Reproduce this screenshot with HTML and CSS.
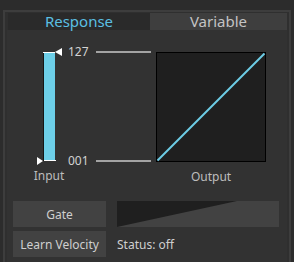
FILE: index.html
```html
<!DOCTYPE html>
<html lang="en">
  <head>
    <meta charset="utf-8" />
    <title>Velocity</title>
    <link rel="stylesheet" href="styles.css">
  </head>
  <body>
    <div class="frame">
      <div class="tabs">
        <div class="tab active">Response</div>
        <div class="tab">Variable</div>
      </div>
      <div class="panel">
        <div class="scale">
          <div class="slider-col">
            <div class="bar"></div>
            <span class="caption">Input</span>
          </div>
          <div class="values">
            <span>127</span>
            <span>001</span>
          </div>
          <div class="lines">
            <div class="line"></div>
            <div class="line"></div>
          </div>
          <div class="graph-col">
            <svg class="graph" width="110" height="110" viewBox="0 0 110 110">
              <rect x="0.5" y="0.5" width="109" height="109" fill="#1f1f1f" stroke="#000" />
              <line x1="1.5" y1="108.5" x2="108.5" y2="1.5" stroke="#6dcde6" stroke-width="2" />
            </svg>
            <span class="caption">Output</span>
          </div>
        </div>

        <div class="row gate-row">
          <button class="btn">Gate</button>
          <svg class="gate" width="162" height="26" viewBox="0 0 162 26">
            <polygon points="0,0 120,0 0,26" fill="#1f1f1f" />
          </svg>
        </div>
        <div class="row">
          <button class="btn">Learn Velocity</button>
          <span class="status">Status: off</span>
        </div>
      </div>
    </div>
  </body>
</html>
```

FILE: styles.css
```css
body {
  margin: 0;
  background-color: #2c2c2c;
  font-family: "Noto Sans", sans-serif;
  overflow: hidden;
}

.frame {
  margin: 10px 3px 0 3px;
  height: 252px;
  border: 2px solid #3d3d3d;
  border-bottom: none;
  background-color: #2f2f2f;
  padding: 1px 2px 0 2px;
  box-sizing: border-box;
}

.tabs {
  display: flex;
  height: 17px;
  margin-left: 1px;
}

.tab {
  flex: 1;
  text-align: center;
  font-size: 15px;
  line-height: 17px;
  color: #c4c4c4;
  background-color: #3e3e3e;
}

.tab.active {
  flex: 0 0 142px;
  color: #5bbfe2;
  background-color: #2a2a2a;
}

.panel {
  height: 240px;
  background-color: #323232;
  padding: 22px 8px 0 6px;
  box-sizing: border-box;
}

.scale {
  display: flex;
  align-items: flex-start;
  margin-left: 22px;
}

.slider-col {
  position: relative;
  width: 28px;
  display: flex;
  flex-direction: column;
  align-items: center;
}

.bar {
  position: relative;
  width: 11px;
  height: 109px;
  background-color: #6dcfe8;
  border-left: 1px solid #151515;
}

.bar::before {
  content: "";
  position: absolute;
  left: -1px;
  right: 0;
  top: 0;
  height: 1px;
  background-color: #fff;
}

.bar::after {
  content: "";
  position: absolute;
  left: 0;
  right: -1px;
  bottom: 0;
  height: 1px;
  background-color: #fff;
}

.slider-col::before,
.slider-col::after {
  content: "";
  position: absolute;
  width: 0;
  height: 0;
  border-top: 4px solid transparent;
  border-bottom: 4px solid transparent;
}

/* top handle, points left */
.slider-col::before {
  left: 20px;
  top: -4px;
  border-right: 7px solid #fff;
}

/* bottom handle, points right */
.slider-col::after {
  left: 2px;
  top: 105px;
  border-left: 6px solid #fff;
}

.caption {
  font-size: 12px;
  line-height: 14px;
  color: #bdbdbd;
  margin-top: 8px;
}

.values {
  width: 28px;
  height: 123px;
  margin: -7px 0 0 5px;
  display: flex;
  flex-direction: column;
  justify-content: space-between;
  font-size: 12px;
  line-height: 14px;
  color: #d2d2d2;
}

.lines {
  width: 55px;
  height: 111px;
  margin-top: -1px;
  display: flex;
  flex-direction: column;
  justify-content: space-between;
}

.line {
  height: 2px;
  background-color: #a3a3a3;
}

.graph-col {
  margin-left: 5px;
  display: flex;
  flex-direction: column;
  align-items: center;
}

.graph {
  display: block;
}

.row {
  display: flex;
  align-items: center;
  gap: 11px;
  height: 26px;
}

.gate-row {
  margin-top: 17px;
}

.row + .row {
  margin-top: 4px;
}

.btn {
  width: 93px;
  height: 26px;
  padding: 0;
  border: none;
  background-color: #424242;
  color: #cfcfcf;
  font-family: "Noto Sans", sans-serif;
  font-size: 12px;
}

.gate {
  display: block;
  background-color: #424242;
}

.status {
  font-size: 12px;
  color: #cfcfcf;
}
```
